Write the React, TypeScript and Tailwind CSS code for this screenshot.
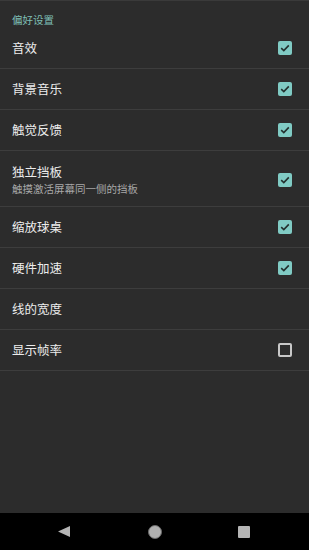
import React from "react";

const font = { fontFamily: '"Noto Sans CJK SC", "Noto Sans", sans-serif' };

function Check({ on }: { on: boolean }) {
  if (!on) {
    return <div className="w-[14px] h-[14px] border-2 border-[#c8c8c8] rounded-[2px]" />;
  }
  return (
    <div className="w-[14px] h-[14px] bg-[#80cbc4] rounded-[2px] flex items-center justify-center">
      <svg width="10" height="8" viewBox="0 0 10 8">
        <path d="M1.2 4.2 L3.8 6.6 L8.8 1.4" fill="none" stroke="#23302e" strokeWidth="1.6" />
      </svg>
    </div>
  );
}

function Row({ title, sub, on }: { title: string; sub?: string; on?: boolean }) {
  return (
    <div
      className={`flex items-center justify-between pl-[12px] pr-[17px] border-b border-[#3d3d3d] ${
        sub ? "pt-[12px] pb-[9px]" : "h-[41px]"
      }`}
    >
      <div className="flex flex-col">
        <span className="text-[12.5px] leading-[18px] text-[#ececec]">{title}</span>
        {sub && <span className="text-[10.5px] leading-[16px] text-[#a8a8a8]">{sub}</span>}
      </div>
      {on !== undefined && <Check on={on} />}
    </div>
  );
}

export default function App() {
  return (
    <div className="w-[309px] h-[550px] flex flex-col bg-[#2c2c2c]" style={font}>
      <div className="flex-1 flex flex-col border-t border-[#3a3a3a]">
        <div className="pl-[12px] pt-[12px] pb-[1px] text-[10.5px] leading-[14px] text-[#7fbfb5]">偏好设置</div>
        <Row title="音效" on={true} />
        <Row title="背景音乐" on={true} />
        <Row title="触觉反馈" on={true} />
        <Row title="独立挡板" sub="触摸激活屏幕同一侧的挡板" on={true} />
        <Row title="缩放球桌" on={true} />
        <Row title="硬件加速" on={true} />
        <Row title="线的宽度" />
        <Row title="显示帧率" on={false} />
      </div>
      <div className="h-[37px] bg-black flex items-center pl-[58px]">
        <svg width="12" height="11" viewBox="0 0 12 11">
          <path d="M0 5.5 L12 0 L12 11 Z" fill="#b5b5b5" />
        </svg>
        <div className="ml-[78px] w-[14px] h-[14px] rounded-full bg-[#b0b0b0] border-[1.5px] border-[#6a6a6a]" />
        <div className="ml-[76px] w-[12px] h-[12px] bg-[#b5b5b5] rounded-[1px]" />
      </div>
    </div>
  );
}
